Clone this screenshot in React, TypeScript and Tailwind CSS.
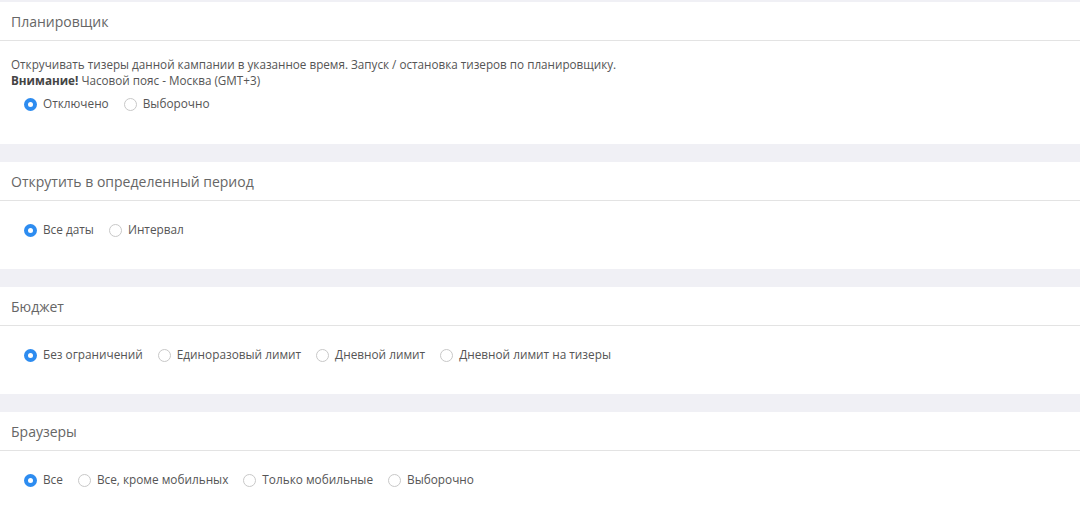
import { useState } from "react";

type Section = {
  title: string;
  options: string[];
  note?: boolean;
};

const SECTIONS: Section[] = [
  { title: "Планировщик", options: ["Отключено", "Выборочно"], note: true },
  { title: "Открутить в определенный период", options: ["Все даты", "Интервал"] },
  {
    title: "Бюджет",
    options: ["Без ограничений", "Единоразовый лимит", "Дневной лимит", "Дневной лимит на тизеры"],
  },
  {
    title: "Браузеры",
    options: ["Все", "Все, кроме мобильных", "Только мобильные", "Выборочно"],
  },
];

function Radio({ checked, label, onClick }: { checked: boolean; label: string; onClick: () => void }) {
  return (
    <label onClick={onClick} className="flex items-center gap-[6px] cursor-pointer">
      {checked ? (
        <span className="w-[13px] h-[13px] rounded-full bg-[#2d8cf0] flex items-center justify-center">
          <span className="w-[5px] h-[5px] rounded-full bg-white" />
        </span>
      ) : (
        <span className="w-[13px] h-[13px] rounded-full border border-[#c8c8c8] bg-white" />
      )}
      <span className="text-[11.8px] text-[#555]">{label}</span>
    </label>
  );
}

function Block({ section, last }: { section: Section; last?: boolean }) {
  const [value, setValue] = useState(0);
  return (
    <div className={last ? "bg-white flex-1" : "bg-white"}>
      <div className="h-[39px] flex items-center px-[11px] border-b border-[#e3e3e3] text-[14px] text-[#666]">
        {section.title}
      </div>
      <div className={section.note ? "h-[103px] pt-[15px] px-[11px]" : "h-[68px] pt-[21px] px-[11px]"}>
        {section.note && (
          <div className="text-[11.7px] leading-[16px] text-[#555] mb-[8px]">
            <p>Откручивать тизеры данной кампании в указанное время. Запуск / остановка тизеров по планировщику.</p>
            <p>
              <b className="font-bold text-[#444]">Внимание!</b> Часовой пояс - Москва (GMT+3)
            </p>
          </div>
        )}
        <div className="flex items-center gap-[15px] pl-[13px] h-[16px]">
          {section.options.map((o, i) => (
            <Radio key={o} label={o} checked={value === i} onClick={() => setValue(i)} />
          ))}
        </div>
      </div>
    </div>
  );
}

export default function App() {
  return (
    <div
      className="w-[1080px] h-[521px] overflow-hidden bg-[#f0f0f5] pt-[2px] flex flex-col gap-[18px]"
      style={{ fontFamily: '"Open Sans", sans-serif' }}
    >
      {SECTIONS.map((s, i) => (
        <Block key={s.title} section={s} last={i === SECTIONS.length - 1} />
      ))}
    </div>
  );
}
